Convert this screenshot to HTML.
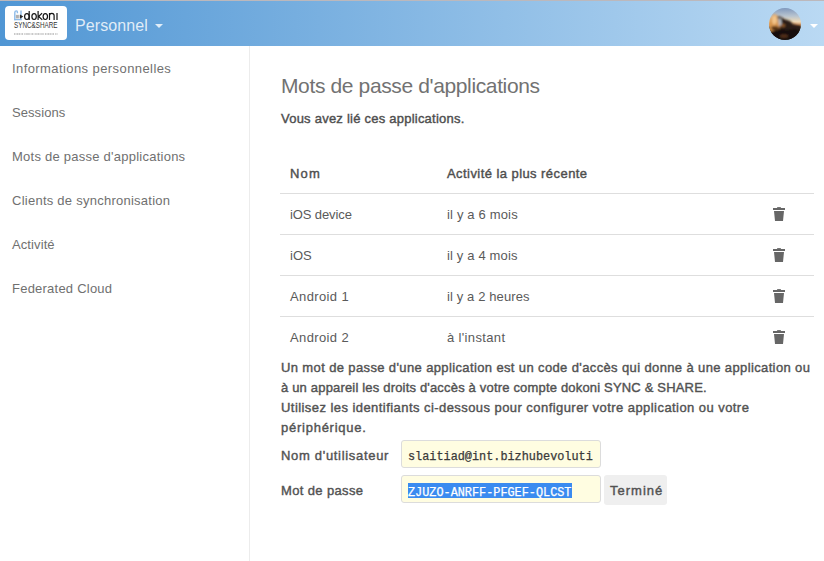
<!DOCTYPE html>
<html><head><meta charset="utf-8">
<style>
html,body{margin:0;padding:0;width:824px;height:561px;overflow:hidden;background:#fff;}
body{font-family:"Liberation Sans",sans-serif;position:relative;}
.a{position:absolute;white-space:pre;line-height:1;}
#topline{position:absolute;left:0;top:0;width:824px;height:1px;background:#bcb8bc;}
#header{position:absolute;left:0;top:1px;width:824px;height:45px;background:linear-gradient(90deg,rgb(80,150,212) 0%,rgb(186,217,243) 100%);}
#logo{position:absolute;left:5px;top:5px;width:62px;height:34px;background:#fff;border-radius:4px;}
#sidebar-border{position:absolute;left:249px;top:46px;width:1px;height:515px;background:#ececec;}
.nav{font-size:13px;color:#707070;left:12px;}
.th{font-size:13px;color:#4e4e4e;-webkit-text-stroke:0.4px #4e4e4e;}
.td{font-size:13px;color:#5a5a5a;}
.rowline{position:absolute;left:280px;width:534px;height:1px;background:#dedede;}
.para{font-size:13px;color:#525252;-webkit-text-stroke:0.4px #525252;left:281px;}
.trash{position:absolute;left:771px;width:16px;height:16px;}
.input{position:absolute;left:401px;width:198px;height:26px;border:1px solid #dcdcdc;border-radius:3px;background:#fffde1;}
.mono{font-family:"Liberation Mono",monospace;font-size:11.85px;color:#3a3a3a;-webkit-text-stroke:0.25px currentColor;}
</style></head><body>
<div id="topline"></div>
<div id="header">
  <div id="logo"><svg width="62" height="34" viewBox="0 0 62 34" style="position:absolute;left:0;top:0">
    <g fill="none" stroke="#8dbbe9" stroke-width="1.4">
      <path d="M9.8 14.2V6.6Q9.8 4.9 11.5 4.9Q12.4 4.9 12.4 6.2V7.2"/>
      <path d="M16 4.4V14.2M9.1 13.6H16.8"/>
    </g>
    <rect x="11" y="8.7" width="4.2" height="3.9" fill="#eeeeee"/>
    <path d="M11.4 8.9v3.5M12.6 8.9v3.5M13.8 8.9v3.5" stroke="#555" stroke-width="0.45"/>
    <path d="M15 8.5L18.3 10.6L15 12.7Z" fill="#2a2a2a"/>
    <g fill="none" stroke="#151515" stroke-width="1.2">
      <ellipse cx="21.9" cy="10.6" rx="2.3" ry="2.9"/>
      <path d="M24.2 4.9V13.9"/>
      <ellipse cx="29.1" cy="10.6" rx="2.2" ry="2.9"/>
      <path d="M33.1 4.9V13.9M37.1 7.1L33.6 10.5L37.3 13.9"/>
      <ellipse cx="40.3" cy="10.6" rx="2.2" ry="2.9"/>
      <path d="M44.5 6.9V13.9M44.5 13.9V9.6A2.3 2.3 0 0 1 49.1 9.6V13.9"/>
      <path d="M52 6.9V13.9"/>
    </g>
    <text x="9" y="22" font-family="Liberation Sans" font-size="8.2" fill="#333" textLength="43.5" lengthAdjust="spacingAndGlyphs">SYNC&amp;SHARE</text>
    <path d="M9 28H52.5" stroke="#b8b8b8" stroke-width="1.7" stroke-dasharray="1.2 0.5 0.8 0.4 1.6 0.5 1 0.6 0.7 0.4 1.4 1.2"/>
  </svg></div>
  <div class="a" style="left:75px;top:17px;font-size:16px;color:rgba(255,255,255,0.82);letter-spacing:0.1px">Personnel</div>
  <svg style="position:absolute;left:155px;top:23px" width="8" height="4" viewBox="0 0 8 4"><path d="M0 0H8L4 4Z" fill="rgba(255,255,255,0.8)"/></svg>
  <svg style="position:absolute;left:769px;top:7px" width="32" height="32" viewBox="0 0 32 32">
    <defs>
      <clipPath id="av"><circle cx="16" cy="16" r="16"/></clipPath>
      <linearGradient id="sky" x1="0" y1="0" x2="0" y2="1">
        <stop offset="0" stop-color="#7f98bd"/>
        <stop offset="0.25" stop-color="#b8c4cf"/>
        <stop offset="0.42" stop-color="#ecd9b8"/>
        <stop offset="0.55" stop-color="#d9955a"/>
        <stop offset="0.62" stop-color="#3b2a20"/>
        <stop offset="1" stop-color="#1c140e"/>
      </linearGradient>
      <filter id="bl" x="-20%" y="-20%" width="140%" height="140%"><feGaussianBlur stdDeviation="0.9"/></filter>
    </defs>
    <g clip-path="url(#av)">
      <rect width="32" height="32" fill="url(#sky)"/>
      <g filter="url(#bl)">
        <path d="M8 8 L12 9 L15 11 L18 12 L21 13 L24 16 L28 17 L32 17.5 L32 32 L0 32 L0 22 Z" fill="#2b1f16"/>
        <path d="M2 9 L5 6 L8 7 L9 12 L11 18 L10 22 L4 24 L0 23 L0 13 Z" fill="#d8954e"/>
        <path d="M3 9 L6 7 L8 9 L8 14 L5 17 L3 14 Z" fill="#f2c48a"/>
        <path d="M9 10 L12 11 L13 17 L10 18 Z" fill="#b9bdc4"/>
        <path d="M0 24 L10 21 L18 22 L26 21 L32 23 L32 32 L0 32 Z" fill="#140d08"/>
        <ellipse cx="14" cy="17.5" rx="2.2" ry="1.8" fill="#8a5428"/>
        <ellipse cx="6" cy="20" rx="4" ry="2" fill="#5a3518"/>
        <ellipse cx="15" cy="28" rx="4" ry="1.6" fill="#5a361a"/>
      </g>
    </g>
  </svg>
  <svg style="position:absolute;left:810px;top:23px" width="8" height="4" viewBox="0 0 8 4"><path d="M0 0H8L4 4Z" fill="#fff"/></svg>
</div>
<div id="sidebar-border"></div>
<div class="a nav" style="top:62px;letter-spacing:0.417px">Informations personnelles</div>
<div class="a nav" style="top:106px;letter-spacing:0.07px">Sessions</div>
<div class="a nav" style="top:150px;letter-spacing:0.244px">Mots de passe d'applications</div>
<div class="a nav" style="top:194px;letter-spacing:0.252px">Clients de synchronisation</div>
<div class="a nav" style="top:238px;letter-spacing:0.1px">Activité</div>
<div class="a nav" style="top:282px;letter-spacing:0.229px">Federated Cloud</div>

<div class="a" style="left:281px;top:75px;font-size:21px;color:#727272;letter-spacing:-0.37px">Mots de passe d'applications</div>
<div class="a th" style="left:281px;top:112px;letter-spacing:0.233px">Vous avez lié ces applications.</div>

<div class="a th" style="left:290px;top:167px;letter-spacing:1.2px">Nom</div>
<div class="a th" style="left:447px;top:167px;letter-spacing:0.435px">Activité la plus récente</div>
<div class="rowline" style="top:193px"></div>
<div class="a td" style="left:290px;top:208px;letter-spacing:-0.111px">iOS device</div>
<div class="a td" style="left:447px;top:208px;letter-spacing:0.167px">il y a 6 mois</div>
<div class="rowline" style="top:234px"></div>
<div class="a td" style="left:290px;top:249px;">iOS</div>
<div class="a td" style="left:447px;top:249px;letter-spacing:0.15px">il y a 4 mois</div>
<div class="rowline" style="top:275px"></div>
<div class="a td" style="left:290px;top:290px;letter-spacing:0.375px">Android 1</div>
<div class="a td" style="left:447px;top:290px;letter-spacing:0.12px">il y a 2 heures</div>
<div class="rowline" style="top:316px"></div>
<div class="a td" style="left:290px;top:331px;letter-spacing:0.375px">Android 2</div>
<div class="a td" style="left:447px;top:331px;letter-spacing:0.35px">à l'instant</div>

<svg class="trash" style="top:206px" width="16" height="16" viewBox="0 0 16 16"><rect x="6" y="1" width="4" height="1.2" rx="0.6" fill="#777"/><path d="M2 2h12v2H2zM3 5h10l-1 10H4z" fill="#666"/></svg>
<svg class="trash" style="top:247px" width="16" height="16" viewBox="0 0 16 16"><rect x="6" y="1" width="4" height="1.2" rx="0.6" fill="#777"/><path d="M2 2h12v2H2zM3 5h10l-1 10H4z" fill="#666"/></svg>
<svg class="trash" style="top:288px" width="16" height="16" viewBox="0 0 16 16"><rect x="6" y="1" width="4" height="1.2" rx="0.6" fill="#777"/><path d="M2 2h12v2H2zM3 5h10l-1 10H4z" fill="#666"/></svg>
<svg class="trash" style="top:329px" width="16" height="16" viewBox="0 0 16 16"><rect x="6" y="1" width="4" height="1.2" rx="0.6" fill="#777"/><path d="M2 2h12v2H2zM3 5h10l-1 10H4z" fill="#666"/></svg>
<div class="a para" style="top:361px;letter-spacing:0.374px">Un mot de passe d'une application est un code d'accès qui donne à une application ou</div>
<div class="a para" style="top:381px;letter-spacing:0.179px">à un appareil les droits d'accès à votre compte dokoni SYNC &amp; SHARE.</div>
<div class="a para" style="top:401px;letter-spacing:0.44px">Utilisez les identifiants ci-dessous pour configurer votre application ou votre</div>
<div class="a para" style="top:421px;letter-spacing:0.75px">périphérique.</div>

<div class="a para" style="top:449px;letter-spacing:0.688px">Nom d'utilisateur</div>
<div class="a para" style="top:484px;letter-spacing:0.364px">Mot de passe</div>
<div class="input" style="top:440px"></div>
<div class="input" style="top:475px"></div>
<div class="a mono" style="left:408px;top:452px">slaitiad@int.bizhubevoluti</div>
<div class="a" style="left:408px;top:483px;width:164px;height:15px;background:#3a8bf0;"></div>
<div class="a mono" style="left:408px;top:488px;color:#fff">ZJUZO-ANRFF-PFGEF-QLCST</div>
<div class="a" style="left:604px;top:475px;width:63px;height:30px;background:#efefef;border-radius:3px;"></div>
<div class="a para" style="left:610px;top:484px;letter-spacing:1px">Terminé</div>
</body></html>
